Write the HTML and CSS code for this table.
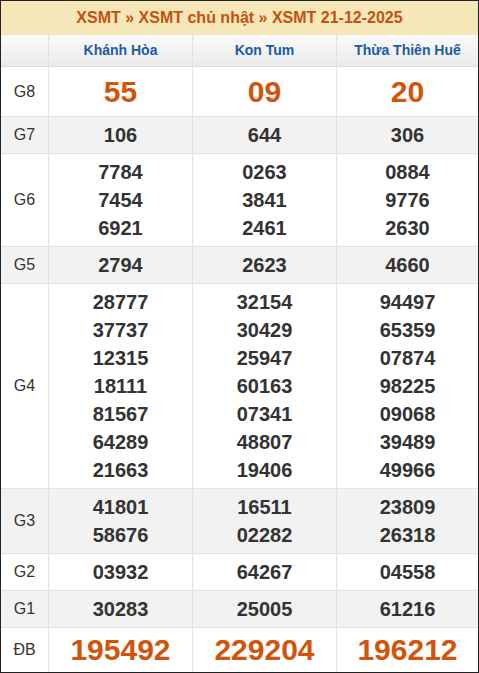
FILE: index.html
```html
<!DOCTYPE html>
<html lang="vi">
<head>
<meta charset="utf-8">
<title>XSMT 21-12-2025</title>
<link rel="stylesheet" href="styles.css">
</head>
<body>
<div class="board">
  <div class="title">XSMT » XSMT chủ nhật » XSMT 21-12-2025</div>
  <div class="row head">
    <div class="lbl"></div>
    <div class="cell">Khánh Hòa</div>
    <div class="cell">Kon Tum</div>
    <div class="cell">Thừa Thiên Huế</div>
  </div>
  <div class="row big g8">
    <div class="lbl">G8</div>
    <div class="cell"><span>55</span></div>
    <div class="cell"><span>09</span></div>
    <div class="cell"><span>20</span></div>
  </div>
  <div class="row alt">
    <div class="lbl">G7</div>
    <div class="cell"><span>106</span></div>
    <div class="cell"><span>644</span></div>
    <div class="cell"><span>306</span></div>
  </div>
  <div class="row">
    <div class="lbl">G6</div>
    <div class="cell"><span>7784</span><span>7454</span><span>6921</span></div>
    <div class="cell"><span>0263</span><span>3841</span><span>2461</span></div>
    <div class="cell"><span>0884</span><span>9776</span><span>2630</span></div>
  </div>
  <div class="row alt">
    <div class="lbl">G5</div>
    <div class="cell"><span>2794</span></div>
    <div class="cell"><span>2623</span></div>
    <div class="cell"><span>4660</span></div>
  </div>
  <div class="row">
    <div class="lbl">G4</div>
    <div class="cell"><span>28777</span><span>37737</span><span>12315</span><span>18111</span><span>81567</span><span>64289</span><span>21663</span></div>
    <div class="cell"><span>32154</span><span>30429</span><span>25947</span><span>60163</span><span>07341</span><span>48807</span><span>19406</span></div>
    <div class="cell"><span>94497</span><span>65359</span><span>07874</span><span>98225</span><span>09068</span><span>39489</span><span>49966</span></div>
  </div>
  <div class="row alt">
    <div class="lbl">G3</div>
    <div class="cell"><span>41801</span><span>58676</span></div>
    <div class="cell"><span>16511</span><span>02282</span></div>
    <div class="cell"><span>23809</span><span>26318</span></div>
  </div>
  <div class="row">
    <div class="lbl">G2</div>
    <div class="cell"><span>03932</span></div>
    <div class="cell"><span>64267</span></div>
    <div class="cell"><span>04558</span></div>
  </div>
  <div class="row alt">
    <div class="lbl">G1</div>
    <div class="cell"><span>30283</span></div>
    <div class="cell"><span>25005</span></div>
    <div class="cell"><span>61216</span></div>
  </div>
  <div class="row big db last">
    <div class="lbl">ĐB</div>
    <div class="cell"><span>195492</span></div>
    <div class="cell"><span>229204</span></div>
    <div class="cell"><span>196212</span></div>
  </div>
</div>
</body>
</html>
```

FILE: styles.css
```css
* { box-sizing: border-box; }
html, body { margin: 0; padding: 0; background: #fff; }
body { font-family: "Liberation Sans", Arial, sans-serif; color: #333; }

.board {
  width: 479px;
  border: 1px solid #222;
  background: #fff;
}

.title {
  height: 34px;
  background: #f6e7b9;
  color: #c8500e;
  font-weight: bold;
  font-size: 16px;
  line-height: 34px;
  text-align: center;
}

.row {
  display: grid;
  grid-template-columns: 47px 144px 144px 142px;
  border-bottom: 1px solid #e2e2e2;
}
.row.last { border-bottom: none; }
.row.alt { background: #f2f2f2; }

.lbl {
  display: flex;
  align-items: center;
  justify-content: center;
  font-size: 16px;
  color: #333;
}

.cell {
  border-left: 1px solid #e2e2e2;
  padding: 4px 0;
  display: flex;
  flex-direction: column;
  align-items: center;
  justify-content: center;
  font-weight: bold;
  font-size: 20px;
  line-height: 28px;
  color: #333;
}

.row.head {
  height: 32px;
  background: linear-gradient(#fafafa, #ebebeb);
  border-bottom: 1px solid #dcdcdc;
}
.row.head .cell {
  padding: 0;
  font-size: 14px;
  line-height: 31px;
  color: #1b5ca6;
}

.row.big .cell {
  font-size: 30px;
  color: #d2540a;
}
.row.g8 .cell { line-height: 41px; }
.row.db .cell { line-height: 36px; }
```
